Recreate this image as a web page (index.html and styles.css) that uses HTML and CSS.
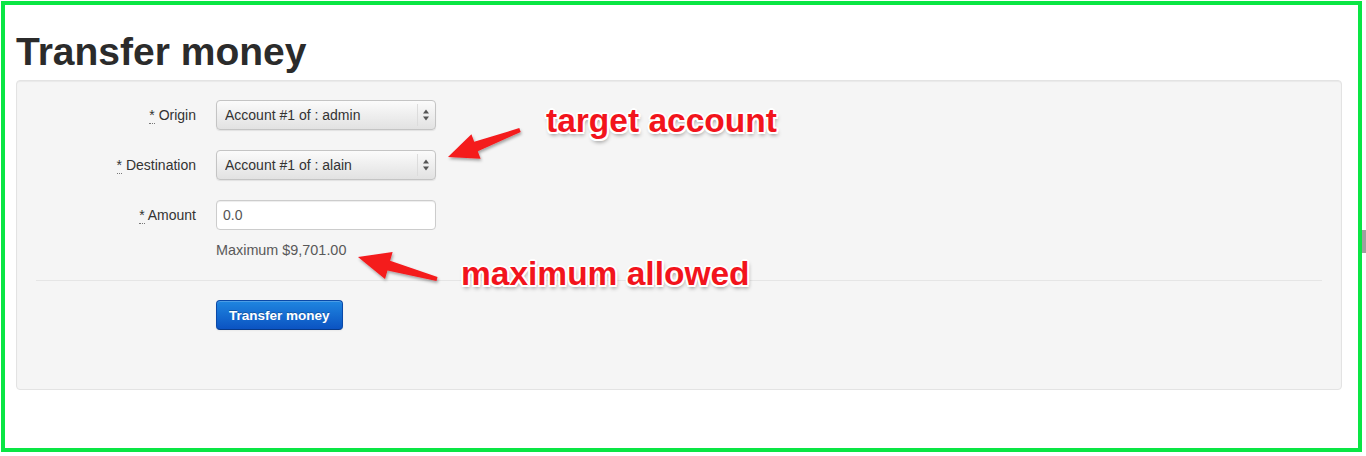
FILE: index.html
```html
<!DOCTYPE html>
<html lang="en">
<head>
<meta charset="utf-8">
<title>Transfer money</title>
<link rel="stylesheet" href="styles.css">
</head>
<body>
<div class="frame">
  <div class="container">
    <h1 class="page-title">Transfer money</h1>
    <div class="well">
      <form class="form-horizontal">
        <div class="control-group">
          <label class="control-label"><abbr title="required">*</abbr> Origin</label>
          <div class="controls">
            <span class="select-wrap">
              <select class="select"><option>Account #1 of : admin</option></select>
              <svg class="select-arrows" width="18" height="28" viewBox="0 0 18 28"><line x1="0.5" y1="3" x2="0.5" y2="25" stroke="#dcdcdc"/><path d="M6 12.5 L9 8.5 L12 12.5 Z M6 15.5 L9 19.5 L12 15.5 Z" fill="#555"/></svg>
            </span>
          </div>
        </div>
        <div class="control-group">
          <label class="control-label"><abbr title="required">*</abbr> Destination</label>
          <div class="controls">
            <span class="select-wrap">
              <select class="select"><option>Account #1 of : alain</option></select>
              <svg class="select-arrows" width="18" height="28" viewBox="0 0 18 28"><line x1="0.5" y1="3" x2="0.5" y2="25" stroke="#dcdcdc"/><path d="M6 12.5 L9 8.5 L12 12.5 Z M6 15.5 L9 19.5 L12 15.5 Z" fill="#555"/></svg>
            </span>
          </div>
        </div>
        <div class="control-group last">
          <label class="control-label"><abbr title="required">*</abbr> Amount</label>
          <div class="controls">
            <input class="input" type="text" value="0.0">
            <p class="help-block">Maximum $9,701.00</p>
          </div>
        </div>
        <div class="form-actions">
          <button type="button" class="btn-primary">Transfer money</button>
        </div>
      </form>
    </div>
  </div>
</div>

<div class="note note-target">target account</div>
<div class="note note-max">maximum allowed</div>
<svg class="arrows" width="1366" height="456" viewBox="0 0 1366 456">
  <defs>
    <filter id="sh" x="-20%" y="-20%" width="140%" height="140%">
      <feDropShadow dx="1" dy="2" stdDeviation="1.5" flood-color="#000" flood-opacity="0.35"/>
    </filter>
  </defs>
  <polygon filter="url(#sh)" fill="#f41a1f" points="448,157 480.6,158.7 477.8,151.2 520.7,131.9 519.3,128.1 474.2,141.8 471.4,134.3"/>
  <polygon filter="url(#sh)" fill="#f41a1f" points="358,257 392.6,252.1 390.1,260.8 437.5,277.1 436.5,280.9 387.5,270.4 385,279.1"/>
</svg>
<div class="scroll-hint"></div>
</body>
</html>
```

FILE: styles.css
```css
html, body {
  margin: 0;
  padding: 0;
  background: #fff;
}

body {
  font-family: "Liberation Sans", Arial, sans-serif;
  font-size: 14px;
  color: #333;
  width: 1366px;
  height: 456px;
  overflow: hidden;
}

.frame {
  margin: 1px 0 0 1px;
  width: 1361px;
  height: 451px;
  box-sizing: border-box;
  border: 4px solid #0ae644;
}

.container {
  padding: 0 16px 0 11px;
}

.page-title {
  margin: 27px 0 8px 0;
  font-size: 39px;
  line-height: 40px;
  font-weight: bold;
  color: #2b2b2b;
}

.well {
  background: #f5f5f5;
  border: 1px solid #e3e3e3;
  border-radius: 4px;
  box-shadow: inset 0 1px 1px rgba(0, 0, 0, 0.05);
  padding: 19px;
}

.form-horizontal {
  margin: 0 0 20px 0;
}

.control-group {
  display: flex;
  margin-bottom: 20px;
}

.control-group.last {
  margin-bottom: 0;
}

.control-label {
  width: 160px;
  flex: none;
  text-align: right;
  line-height: 30px;
  margin-right: 20px;
  color: #333;
}

.control-label abbr {
  text-decoration: none;
  border-bottom: 1px dotted #777;
  cursor: help;
}

.controls {
  display: flex;
  flex-direction: column;
  align-items: flex-start;
}

.select-wrap {
  position: relative;
  display: block;
  width: 220px;
  height: 30px;
}

.select {
  appearance: none;
  -webkit-appearance: none;
  display: block;
  width: 220px;
  height: 30px;
  margin: 0;
  box-sizing: border-box;
  padding: 0 24px 0 8px;
  font-family: "Liberation Sans", Arial, sans-serif;
  font-size: 14px;
  color: #333;
  background: linear-gradient(to bottom, #fbfbfb 0%, #ededed 55%, #e2e2e2 100%);
  border: 1px solid #c4c4c4;
  border-radius: 4px;
  box-shadow: 0 1px 1px rgba(0, 0, 0, 0.08);
  outline: none;
}

.select-arrows {
  position: absolute;
  right: 1px;
  top: 1px;
  pointer-events: none;
}

.input {
  display: block;
  width: 220px;
  height: 30px;
  box-sizing: border-box;
  margin: 0;
  padding: 4px 6px;
  font-family: "Liberation Sans", Arial, sans-serif;
  font-size: 14px;
  color: #555;
  background: #fff;
  border: 1px solid #cccccc;
  border-radius: 4px;
  box-shadow: inset 0 1px 1px rgba(0, 0, 0, 0.075);
  outline: none;
}

.help-block {
  margin: 10px 0 0 0;
  line-height: 20px;
  font-size: 14.4px;
  color: #595959;
}

.form-actions {
  margin-top: 20px;
  padding: 19px 20px 20px 180px;
  border-top: 1px solid #e5e5e5;
}

.btn-primary {
  display: block;
  height: 30px;
  box-sizing: border-box;
  padding: 0 12px;
  font-family: "Liberation Sans", Arial, sans-serif;
  font-size: 13.5px;
  font-weight: bold;
  color: #fff;
  text-shadow: 0 -1px 0 rgba(0, 0, 0, 0.25);
  background: linear-gradient(to bottom, #1f86e0, #0b53c2);
  border: 1px solid #0a49a8;
  border-bottom-color: #073a8a;
  border-radius: 4px;
  box-shadow: inset 0 1px 0 rgba(255, 255, 255, 0.2), 0 1px 2px rgba(0, 0, 0, 0.05);
  cursor: pointer;
}

.note {
  position: absolute;
  font-family: "Liberation Sans", Arial, sans-serif;
  font-weight: bold;
  font-size: 33.5px;
  line-height: 33.5px;
  color: #f2141c;
  white-space: nowrap;
  text-shadow:
    2px 0 0 #fff, -2px 0 0 #fff, 0 2px 0 #fff, 0 -2px 0 #fff,
    1.5px 1.5px 0 #fff, -1.5px 1.5px 0 #fff, 1.5px -1.5px 0 #fff, -1.5px -1.5px 0 #fff,
    1px 3px 4px rgba(0, 0, 0, 0.45);
}

.note-target {
  left: 546px;
  top: 104px;
}

.note-max {
  left: 461px;
  top: 257px;
}

.arrows {
  position: absolute;
  left: 0;
  top: 0;
  pointer-events: none;
}

.scroll-hint {
  position: absolute;
  left: 1362px;
  top: 230px;
  width: 4px;
  height: 23px;
  background: #a0a0a0;
}
```
